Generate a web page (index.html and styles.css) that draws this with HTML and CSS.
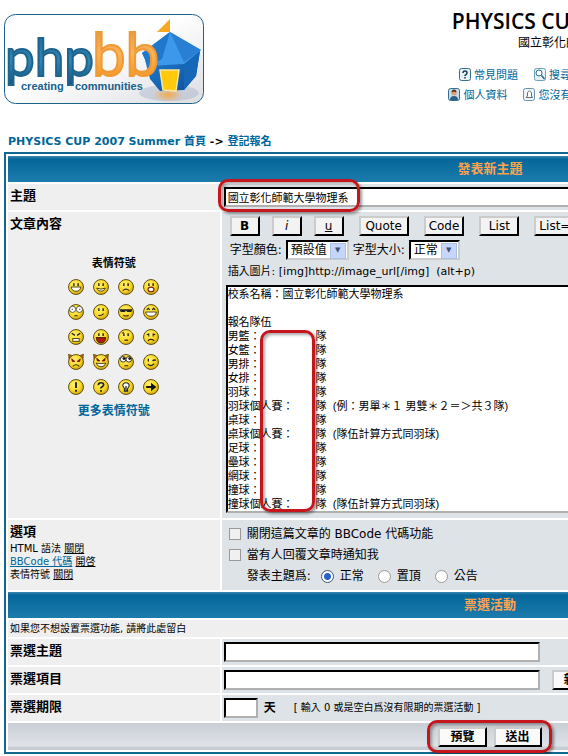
FILE: index.html
```html
<!DOCTYPE html>
<html lang="zh-Hant">
<head>
<meta charset="utf-8">
<title>PHYSICS CUP 2007 Summer</title>
<link rel="stylesheet" href="styles.css">
</head>
<body>
<svg class="defs" aria-hidden="true">
  <defs>
    <radialGradient id="skin" cx="40%" cy="35%" r="70%"><stop offset="0" stop-color="#fff27a"/><stop offset=".6" stop-color="#f8d820"/><stop offset="1" stop-color="#c99a08"/></radialGradient>
    <symbol id="face" viewBox="0 0 15 15"><circle cx="7.5" cy="7.5" r="7" fill="url(#skin)" stroke="#5c4a10" stroke-width=".9"/></symbol>
    <symbol id="eyes" viewBox="0 0 15 15"><path d="M5.5 4v2.500M9.500 4v2.500" stroke="#2a2000" stroke-width="1.300"/></symbol>
  </defs>
</svg>
<div class="page">
  <header class="top">
    <a class="logo" href="#" aria-label="phpbb creating communities">
      <svg viewBox="0 0 200 90" width="200" height="90">
        <defs>
          <linearGradient id="paper" x1="0" y1="0" x2="1" y2="1"><stop offset=".45" stop-color="#fff"/><stop offset="1" stop-color="#dcdde2"/></linearGradient>
          <linearGradient id="blue" x1="0" y1="0" x2="0" y2="1"><stop offset="0" stop-color="#1d5f8e"/><stop offset=".6" stop-color="#2f86b4"/><stop offset="1" stop-color="#155078"/></linearGradient>
          <linearGradient id="orange" x1="0" y1="0" x2="0" y2="1"><stop offset="0" stop-color="#d98a35"/><stop offset=".5" stop-color="#fcb45c"/><stop offset="1" stop-color="#f28a10"/></linearGradient>
          <linearGradient id="wall" x1="0" y1="0" x2="1" y2="1"><stop offset="0" stop-color="#2580d0"/><stop offset="1" stop-color="#0a4f9c"/></linearGradient>
          <radialGradient id="glow"><stop offset="0" stop-color="#f3a94b"/><stop offset="1" stop-color="#f3a94b" stop-opacity="0"/></radialGradient>
        </defs>
        <rect x=".5" y=".5" width="199" height="89" rx="11" fill="url(#paper)" stroke="#1d6388"/>
        <ellipse cx="165" cy="79" rx="30" ry="8" fill="#8899b5" opacity=".3"/>
        <ellipse cx="164" cy="81" rx="15" ry="7" fill="url(#glow)"/>
        <path d="M141 46 196 37 192 62 180 76 156 77 146 65Z" fill="url(#wall)"/>
        <path d="M180 52 196 37 192 62 180 76Z" fill="#1767b8"/>
        <path d="M166 18 138 39 144 52 180 50 197 36Z" fill="#3c98ea"/>
        <path d="M166 18 180 48 197 36Z" fill="#297fd3"/>
        <path d="M166 18 138 39 144 52 158 45Z" fill="#1f78ca"/>
        <path d="M166 5v13h-13Z" fill="#f7a823"/>
        <path d="M156 56h19l-3 21-13-1Z" fill="#ffc90c" stroke="#f9e6a0" stroke-width="1.500"/>
        <text class="logo-php" x="1" y="62" fill="url(#blue)" stroke="#1f648f">php</text>
        <text class="logo-bb" x="88" y="62" fill="url(#orange)" stroke="#f09a35">bb</text>
        <text class="logo-tag" x="17" y="76" fill="#17618d">creating</text>
        <text class="logo-tag" x="71" y="76" fill="#17618d">communities</text>
      </svg>
    </a>
    <div class="masthead">
      <h1>PHYSICS CUP 2007 Summer</h1>
      <p class="sub">國立彰化師範大學物理學系</p>
      <nav class="menu">
        <a href="#"><svg viewBox="0 0 12 13"><rect x=".5" y=".5" width="11" height="12" rx="2" fill="#e8f1f6" stroke="#356e8e"/><path d="M4 5q0-2 2-2t2 2q0 1-2 2.500V8M6 9v1.500" fill="none" stroke="#173f55" stroke-width="1.500"/></svg>常見問題</a>
        <a href="#"><svg viewBox="0 0 12 13"><rect x=".5" y=".5" width="11" height="12" rx="2" fill="#e8f1f6" stroke="#68a0bd"/><circle cx="5" cy="5" r="3" fill="#fff" stroke="#2d7095"/><path d="m7.500 7.500 3 3.500" stroke="#2d7095" stroke-width="1.600"/></svg>搜尋</a>
        <a href="#"><svg viewBox="0 0 12 13"><rect x=".5" y=".5" width="11" height="12" rx="2" fill="#e8f1f6" stroke="#68a0bd"/></svg>會員列表</a>
        <a href="#"><svg viewBox="0 0 12 13"><rect x=".5" y=".5" width="11" height="12" rx="2" fill="#e8f1f6" stroke="#68a0bd"/></svg>會員群組</a>
      </nav>
      <nav class="menu">
        <a href="#"><svg viewBox="0 0 12 13"><rect x=".5" y=".5" width="11" height="12" rx="2" fill="#c8dce8" stroke="#356e8e"/><path d="M2 12q0-4 4-4t4 4Z" fill="#2d6088"/><circle cx="6" cy="5" r="2.500" fill="#dba078"/><path d="M3.500 4.500q0-3 2.500-3t2.500 3L6 3.500Z" fill="#59351c"/></svg>個人資料</a>
        <a href="#"><svg viewBox="0 0 12 13"><rect x=".5" y=".5" width="11" height="12" rx="2" fill="#edf3f6" stroke="#6995ac"/><path d="M3 9.500h6.500L8.500 8V4.500l-2-1.500-2 1.500V8Z" fill="#fff" stroke="#61717a"/></svg>您沒有新私人訊息</a>
        <a href="#"><svg viewBox="0 0 12 13"><rect x=".5" y=".5" width="11" height="12" rx="2" fill="#e8f1f6" stroke="#68a0bd"/></svg>登出 [ 物理系 ]</a>
      </nav>
    </div>
  </header>

  <p class="crumbs"><a href="#">PHYSICS CUP 2007 Summer 首頁</a> -&gt; <a href="#">登記報名</a></p>

  <form class="panel">
    <h2 class="bar">發表新主題</h2>
    <div class="row">
      <label class="cell name" for="subject">主題</label>
      <div class="cell field marked">
        <input class="box long" id="subject" type="text" value="國立彰化師範大學物理系">
        <span class="mark mark-subject"></span>
      </div>
    </div>
    <div class="row">
      <div class="cell name">
        <label for="message">文章內容</label>
        <div class="smilies">
          <h3>表情符號</h3>
          <div class="faces">
            <svg viewBox="0 0 15 15"><use href="#face"/><use href="#eyes"/><path d="M3 7.500h9q-.5 4-4.500 4T3 7.500Z" fill="#fff" stroke="#3a2a00" stroke-width=".8"/></svg>
            <svg viewBox="0 0 15 15"><use href="#face"/><use href="#eyes"/><path d="M3.500 8.500q4 2 8 0-1 3-4 3t-4-3Z" fill="#fff" stroke="#3a2a00" stroke-width=".8"/></svg>
            <svg viewBox="0 0 15 15"><use href="#face"/><use href="#eyes"/><path d="M4.500 11q3-3 6 0" fill="none" stroke="#3a2a00"/></svg>
            <svg viewBox="0 0 15 15"><use href="#face"/><use href="#eyes"/><ellipse cx="7.500" cy="9.800" rx="2.800" ry="2.200" fill="#fff" stroke="#8a1a00"/></svg>
            <svg viewBox="0 0 15 15"><use href="#face"/><circle cx="4.300" cy="5" r="2.900" fill="#fff" stroke="#333" stroke-width=".7"/><circle cx="10.700" cy="5" r="2.900" fill="#fff" stroke="#333" stroke-width=".7"/><path d="M4 4.500v1M11 4.500v1M6 11h3" stroke="#222"/></svg>
            <svg viewBox="0 0 15 15"><use href="#face"/><use href="#eyes"/><path d="M5 10.500q3 1 5-1.500" fill="none" stroke="#3a2a00"/></svg>
            <svg viewBox="0 0 15 15"><use href="#face"/><path d="M1.500 5h12l-1 2.500H8.500L7.500 6l-1 1.500h-4Z" fill="#222"/><path d="M5 10.500q2.500 1.500 5 0" fill="none" stroke="#3a2a00"/></svg>
            <svg viewBox="0 0 15 15"><use href="#face"/><path d="m3.500 5.500 1.500-1.500 1.500 1.500M8.500 5.500 10 4l1.500 1.500" fill="none" stroke="#222"/><path d="M2.500 7.500h10q-.5 4-5 4t-5-4Z" fill="#fff" stroke="#3a2a00" stroke-width=".8"/></svg>
            <svg viewBox="0 0 15 15"><use href="#face"/><path d="m3.500 4 3 2M11.500 4l-3 2" stroke="#222" stroke-width="1.200"/><rect x="4.500" y="9" width="6" height="2.500" fill="#fff" stroke="#3a2a00" stroke-width=".8"/></svg>
            <svg viewBox="0 0 15 15"><use href="#face"/><use href="#eyes"/><path d="M3 8h9q-.5 5-4.500 5T3 8Z" fill="#b01810" stroke="#3a1000" stroke-width=".8"/></svg>
            <svg viewBox="0 0 15 15"><use href="#face"/><use href="#eyes"/><path d="M6 10.500h3.500" stroke="#3a2a00" stroke-width="1.200"/><path d="m3.500 4 2-1" stroke="#604800"/></svg>
            <svg viewBox="0 0 15 15"><use href="#face"/><path d="m3.500 5.500 2.500-1M9 4.500l2.500 1M5.500 5v2M9.500 5v2" stroke="#222"/><path d="M4.500 11q3-2.500 6 0" fill="none" stroke="#3a2a00"/></svg>
            <svg viewBox="0 0 15 15"><path d="M.5 0 5 2 1 5.500ZM14.500 0 10 2l4 3.500Z" fill="#a9680c" stroke="#5c3a08" stroke-width=".6"/><use href="#face"/><path d="m3.500 4.500 3 2.500H4ZM11.500 4.500l-3 2.500H11Z" fill="#8a1208" stroke="#8a1208" stroke-width=".8"/><path d="M4.500 11.500q3-3 6 0" fill="none" stroke="#3a2a00"/></svg>
            <svg viewBox="0 0 15 15"><path d="M.5 0 5 2 1 5.500ZM14.500 0 10 2l4 3.500Z" fill="#a9680c" stroke="#5c3a08" stroke-width=".6"/><use href="#face"/><path d="m3.500 4 3 2.500H4ZM11.500 4l-3 2.500H11Z" fill="#8a1208" stroke="#8a1208" stroke-width=".8"/><path d="M3 8.500q4.500 1 9 0-1 3.500-4.500 3.500T3 8.500Z" fill="#fff" stroke="#3a2a00" stroke-width=".8"/></svg>
            <svg viewBox="0 0 15 15"><use href="#face"/><circle cx="4.800" cy="5" r="2.600" fill="#fff" stroke="#222" stroke-width=".8"/><circle cx="10.200" cy="5" r="2.600" fill="#fff" stroke="#222" stroke-width=".8"/><circle cx="5.600" cy="4.300" r="1.300" fill="#111"/><circle cx="11" cy="4.300" r="1.300" fill="#111"/><path d="M6 11h3.500" stroke="#3a2a00"/></svg>
            <svg viewBox="0 0 15 15"><use href="#face"/><path d="M5 4.500V7M9 6.500q1.500-1.500 3-.5M4.500 9.500q3 3 6-.5" fill="none" stroke="#222" stroke-width="1.200"/></svg>
            <svg viewBox="0 0 15 15"><use href="#face"/><path d="M7.500 3v5.500M7.500 10v2" stroke="#222" stroke-width="1.800"/></svg>
            <svg viewBox="0 0 15 15"><use href="#face"/><path d="M5 5.800Q5 3.500 7.500 3.500T10 5.500q0 1.200-2.500 2.700V9M7.500 10.200V12" fill="none" stroke="#222" stroke-width="1.600"/></svg>
            <svg viewBox="0 0 15 15"><use href="#face"/><path d="M6 9 4.500 6.500q0-3 3-3t3 3L9 9v2.500H6Z" fill="#fff" stroke="#222"/><path d="M6 10.500h3M7.500 6.500v3" stroke="#222" stroke-width="1.200"/></svg>
            <svg viewBox="0 0 15 15"><use href="#face"/><path d="M3 6.500h4.500v-3l5 4-5 4v-3H3Z" fill="#111"/></svg>
          </div>
          <a class="more" href="#">更多表情符號</a>
        </div>
      </div>
      <div class="cell field editor">
        <div class="tools">
          <button type="button" class="tool key bold">B</button>
          <button type="button" class="tool key italic">i</button>
          <button type="button" class="tool key under">u</button>
          <button type="button" class="tool wide">Quote</button>
          <button type="button" class="tool">Code</button>
          <button type="button" class="tool">List</button>
          <button type="button" class="tool">List=</button>
        </div>
        <div class="fonts">
          <label for="color">字型顏色:</label>
          <span class="drop"><select id="color"><option>預設值</option></select></span>
          <label for="size">字型大小:</label>
          <span class="drop"><select id="size"><option>正常</option></select></span>
        </div>
        <p class="hint">插入圖片: [img]http://image_url[/img]&nbsp; (alt+p)</p>
        <div class="marked">
          <textarea class="box long" id="message" rows="16">校系名稱：國立彰化師範大學物理系

報名隊伍
男籃：　　　　　隊
女籃：　　　　　隊
男排：　　　　　隊
女排：　　　　　隊
羽球：　　　　　隊
羽球個人賽：　　隊  (例：男單＊１ 男雙＊２＝＞共３隊)
桌球：　　　　　隊
桌球個人賽：　　隊  (隊伍計算方式同羽球)
足球：　　　　　隊
壘球：　　　　　隊
網球：　　　　　隊
撞球：　　　　　隊
撞球個人賽：　　隊  (隊伍計算方式同羽球)</textarea>
          <span class="mark mark-teams"></span>
        </div>
      </div>
    </div>
    <div class="row">
      <div class="cell name">選項
        <ul class="status">
          <li>HTML 語法 <u>關閉</u></li>
          <li><a href="#">BBCode 代碼</a> <u>開啓</u></li>
          <li>表情符號 <u>關閉</u></li>
        </ul>
      </div>
      <div class="cell field options">
        <label><input type="checkbox">關閉這篇文章的 BBCode 代碼功能</label>
        <label><input type="checkbox">當有人回覆文章時通知我</label>
        <div class="kinds">發表主題爲:
          <label><input type="radio" name="kind" checked>正常</label>
          <label><input type="radio" name="kind">置頂</label>
          <label><input type="radio" name="kind">公告</label>
        </div>
      </div>
    </div>
    <h2 class="bar">票選活動</h2>
    <p class="note">如果您不想設置票選功能, 請將此處留白</p>
    <div class="row">
      <label class="cell name" for="poll">票選主題</label>
      <div class="cell field"><input class="box medium" id="poll" type="text"></div>
    </div>
    <div class="row">
      <label class="cell name" for="choice">票選項目</label>
      <div class="cell field"><input class="box medium" id="choice" type="text"><button type="button" class="tool strong">新增選項</button></div>
    </div>
    <div class="row">
      <label class="cell name" for="days">票選期限</label>
      <div class="cell field"><input class="box short" id="days" type="text"><b class="unit">天</b><span class="small">[ 輸入 0 或是空白爲沒有限期的票選活動 ]</span></div>
    </div>
    <div class="foot">
      <div class="actions marked">
        <button type="button" class="tool strong">預覽</button>
        <button type="submit" class="tool strong">送出</button>
        <span class="mark mark-actions"></span>
      </div>
    </div>
  </form>
</div>
</body>
</html>
```
FILE: styles.css
```css
* { box-sizing: border-box; }

html { overflow: hidden; }

body {
  margin: 0;
  background: #fff;
  color: #000;
  font-family: "DejaVu Sans", "Noto Sans CJK TC", sans-serif;
  font-size: 12px;
  line-height: 16px;
}

h1, h2, h3, p, ul { margin: 0; padding: 0; }
a { color: #006699; text-decoration: none; }
button, input, select, textarea { margin: 0; font: inherit; color: #000; }
.defs { position: absolute; width: 0; height: 0; }

.page { min-width: 980px; padding: 8px 4px 0; }

.top { display: flex; min-height: 122px; }
.logo { flex: none; padding-top: 6px; }
.logo svg { display: block; }
.logo-php { font: 53px Lato, sans-serif; stroke-width: 2px; }
.logo-bb { font: 60px Lato, sans-serif; stroke-width: 2px; }
.logo-tag { font: bold 11px "Liberation Sans", sans-serif; }

.masthead { flex: 1; text-align: center; }
h1 { font: 600 21px/26px "Open Sans", sans-serif; }
.sub { margin-bottom: 16px; line-height: 18px; }
.menu { display: flex; justify-content: center; gap: 16px; height: 20px; font-size: 11px; }
.menu a { display: flex; gap: 3px; line-height: 16px; }
.menu svg { width: 12px; height: 13px; }

.crumbs { padding: 4px 4px 2px; font-size: 11px; font-weight: bold; }

.panel {
  display: flex;
  flex-direction: column;
  gap: 2px;
  padding: 2px;
  border: 2px solid #126890;
}

.bar {
  background: linear-gradient(#3c88b0 0, #04669a 3px, #1c7cac 100%);
  color: #ffa34f;
  font-size: 13px;
  line-height: 26px;
  text-align: center;
}

.row { display: grid; grid-template-columns: 22fr 78fr; gap: 2px; }
.cell { min-height: 26px; }
.name { padding: 2px; background: #efefef; font-size: 13px; font-weight: bold; line-height: 20px; }
.field { display: flex; align-items: center; padding: 0 2px; background: #dee3e7; }

.box {
  height: 20px;
  padding: 0 2px;
  border: 2px solid;
  border-color: #000 #b0b0b0 #b0b0b0 #000;
  border-radius: 0;
  background: #fff;
  font: 11px/14px "Liberation Sans", "Noto Sans CJK TC", sans-serif;
}
.long { width: 60%; }
.medium { width: 316px; }
.short { width: 34px; }
textarea.box { display: block; height: auto; padding: 0; resize: none; overflow: hidden; }

.smilies { display: flex; flex-direction: column; align-items: center; padding-top: 20px; }
.smilies h3 { font-size: 11px; line-height: 20px; }
.faces { display: grid; grid-template-columns: repeat(4, 25px); grid-auto-rows: 25px; place-items: center; }
.faces svg { width: 16px; height: 16px; }
.more { font-size: 12px; line-height: 24px; }

.editor { flex-direction: column; align-items: stretch; padding: 4px 4px 5px; }
.tools { display: flex; gap: 15px; padding: 0 4px 2px; }
.tool {
  min-width: 40px;
  height: 20px;
  padding: 0 3px;
  border: 2px solid;
  border-color: #ccc #000 #000 #ccc;
  background: #f3f3f3;
  line-height: 16px;
}
.key { min-width: 30px; margin-right: -3px; padding: 0; }
.under { margin-right: 0; text-decoration: underline; }
.wide { min-width: 50px; }
.bold { font-weight: bold; }
.italic { font-style: italic; }
.strong { padding: 0 10px; background: #fafafa; font-weight: bold; }

.fonts { display: flex; align-items: center; gap: 4px; padding: 2px 4px; }
.drop { position: relative; }
.drop select {
  appearance: none;
  display: block;
  height: 20px;
  padding: 0 19px 0 3px;
  border: 2px solid;
  border-color: #000 #ccc #ccc #000;
  border-radius: 0;
  background: #fff;
  font-size: 12px;
  line-height: 16px;
}
.drop::after {
  content: "▼";
  position: absolute;
  top: 3px;
  right: 3px;
  width: 14px;
  height: 14px;
  border: 1px solid #a9bfe8;
  background: #c6d6fa;
  color: #3c5278;
  font-size: 7px;
  line-height: 12px;
  text-align: center;
  pointer-events: none;
}
.hint { padding: 2px 2px 5px; font-size: 11px; }

.status { padding-bottom: 7px; list-style: none; font-size: 10px; font-weight: normal; line-height: 13px; }
.status a { text-decoration: underline; }

.options { flex-direction: column; align-items: flex-start; padding: 3px 7px; }
.options > label { display: flex; align-items: center; gap: 6px; height: 21px; }
.options input { appearance: none; width: 12px; height: 12px; border: 1px solid #999; background: #f0f0f0; }
.kinds { display: flex; align-items: center; height: 22px; padding-left: 18px; }
.kinds label { display: flex; align-items: center; gap: 6px; margin-left: 10px; }
.kinds label + label { margin-left: 14px; }
.kinds input { width: 13px; height: 13px; border-radius: 50%; background: #fff; }
.kinds input:checked { border-color: #456; background: radial-gradient(#2860cc 3px, #fff 4px); }

.note { padding: 0 2px; background: #efefef; font-size: 10px; line-height: 17px; }
.medium + .tool { margin-left: 12px; }
.unit { margin: 0 18px 0 6px; }
.small { font-size: 10px; }

.foot { display: flex; justify-content: center; padding: 4px 0 3px; background: linear-gradient(#c9ced5, #dfe3e8 85%, #c8cdd4 90%); }
.actions { display: flex; gap: 7px; }

.marked { position: relative; }
.mark {
  position: absolute;
  border: 3px solid #c4161c;
  border-radius: 10px;
  box-shadow: 2px 2px 3px #0006, inset 2px 2px 3px #0005;
  pointer-events: none;
}
.mark-subject { top: -5px; left: -4px; width: 142px; height: 33px; }
.mark-teams { top: 45px; left: 34px; width: 55px; height: 182px; }
.mark-actions { inset: -7px -10px -6px -11px; }
```
